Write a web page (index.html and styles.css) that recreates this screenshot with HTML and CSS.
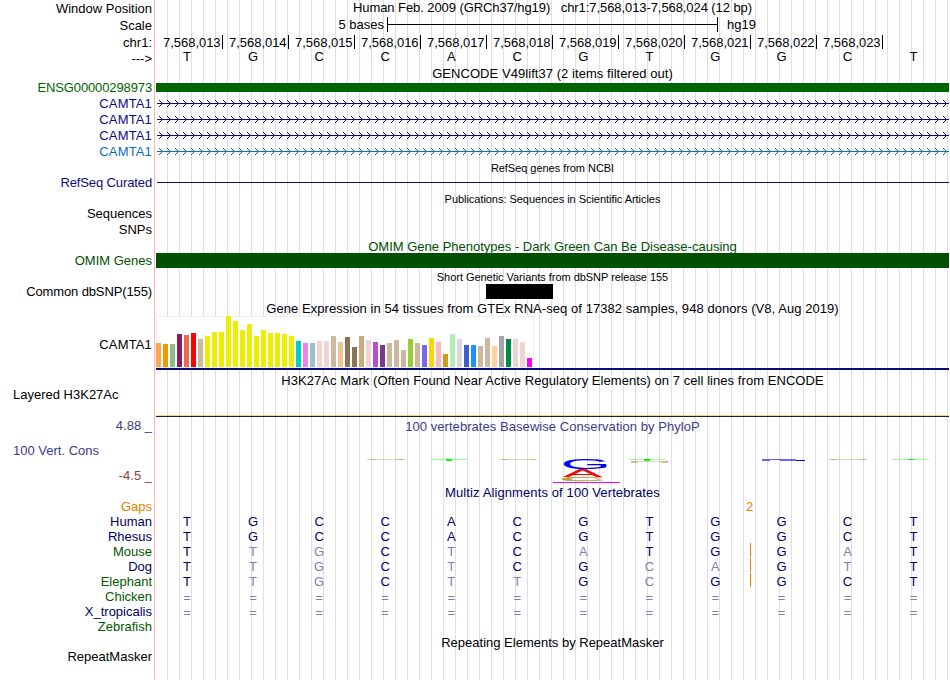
FILE: index.html
```html
<!DOCTYPE html>
<html lang="en">
<head>
<meta charset="utf-8">
<title>Genome Browser - Human hg19 chr1:7,568,013-7,568,024</title>
<link rel="stylesheet" href="styles.css">
</head>
<body>
<main class="browser">
  <div class="row h17"><div class="label down1">Window Position</div><div class="track"><div class="title t-pos">Human Feb. 2009 (GRCh37/hg19)&nbsp;&nbsp; chr1:7,568,013-7,568,024 (12 bp)</div></div></div>
  <div class="row h16"><div class="label down1">Scale</div><div class="track scale"><span class="scale-left">5 bases</span><span class="scale-bar"></span><span>hg19</span></div></div>
  <div class="row h16"><div class="label down2">chr1:</div><div class="track ruler" id="ruler"></div></div>
  <div class="row h16"><div class="label down2">---&gt;</div><div class="track bases black" data-seq="TGCCACGTGGCT"></div></div>
  <div class="row h15"><div class="label"></div><div class="track"><div class="title down1 wide">GENCODE V49lift37 (2 items filtered out)</div></div></div>
  <div class="row h16"><div class="label green tight">ENSG00000298973</div><div class="track"><div class="gene-bar"></div></div></div>
  <div class="row h16"><div class="label navy loose">CAMTA1</div><div class="track intron navy"></div></div>
  <div class="row h16"><div class="label navy loose">CAMTA1</div><div class="track intron navy"></div></div>
  <div class="row h16"><div class="label navy loose">CAMTA1</div><div class="track intron navy"></div></div>
  <div class="row h16"><div class="label sky loose">CAMTA1</div><div class="track intron sky"></div></div>
  <div class="row h15"><div class="label"></div><div class="track"><div class="title small">RefSeq genes from NCBI</div></div></div>
  <div class="row h16"><div class="label navy tight">RefSeq Curated</div><div class="track"><div class="thin-line"></div></div></div>
  <div class="row h15"><div class="label"></div><div class="track"><div class="title small">Publications: Sequences in Scientific Articles</div></div></div>
  <div class="row h16"><div class="label">Sequences</div><div class="track"></div></div>
  <div class="row h16"><div class="label">SNPs</div><div class="track"></div></div>
  <div class="row h15"><div class="label"></div><div class="track"><div class="title down1 darkgreen">OMIM Gene Phenotypes - Dark Green Can Be Disease-causing</div></div></div>
  <div class="row h16"><div class="label darkgreen">OMIM Genes</div><div class="track"><div class="omim-bar"></div></div></div>
  <div class="row h15"><div class="label"></div><div class="track"><div class="title small">Short Genetic Variants from dbSNP release 155</div></div></div>
  <div class="row h16"><div class="label tight">Common dbSNP(155)</div><div class="track"><div class="snp"></div></div></div>
  <div class="row h16"><div class="label"></div><div class="track"><div class="title down1 wide">Gene Expression in 54 tissues from GTEx RNA-seq of 17382 samples, 948 donors (V8, Aug 2019)</div></div></div>
  <div class="row h56"><div class="label gtex-label loose">CAMTA1</div><div class="track"><div class="gtex" id="gtex"></div><div class="gtex-base"></div></div></div>
  <div class="row h15"><div class="label"></div><div class="track"><div class="title down1 wide">H3K27Ac Mark (Often Found Near Active Regulatory Elements) on 7 cell lines from ENCODE</div></div></div>
  <div class="row h31"><div class="label left">Layered H3K27Ac</div><div class="track"><div class="h3k-line"></div></div></div>
  <div class="row h66">
    <div class="label cons"><span class="blue">4.88 _</span><span class="blue left">100 Vert. Cons</span><span class="red">-4.5 _</span></div>
    <div class="track">
      <div class="title down1 blue wide">100 vertebrates Basewise Conservation by PhyloP</div>
      <svg class="logo" width="793" height="28" viewBox="156 456 793 28">
        <path class="olive faint" d="M367 459.5h38M499 459.5h38M829 459.5h38"/>
        <path class="olive half" d="M370 459.5h6M397 459.5h7M502 459.5h6M530 459.5h6M831 459.5h6M859 459.5h6"/>
        <path class="lime faint" d="M431 459.5h36M629 459.5h36M892 459.5h37"/>
        <path class="lime" d="M446 460h6M644 460h6" stroke-width="2"/>
        <path class="lime" d="M908 459.5h6"/>
        <path class="olive faint" d="M631 461.5h38"/>
        <path class="olive half" d="M631 462h7M661 462h7" stroke-width="2"/>
        <path class="blue-stroke half" d="M762 460h8" stroke-width="2"/>
        <path class="blue-stroke half" d="M770 459.5h26M780 460.5h16"/>
        <path class="blue-stroke" d="M796 460.5h9"/>
        <text class="nt" fill="#0000ff" transform="translate(560.5 469.2) scale(3.25 .71)">G</text>
        <text class="nt" fill="#ff0000" transform="translate(563 477) scale(2.95 .51)">A</text>
        <text class="nt" fill="#b5a642" stroke="#b5a642" transform="translate(560 481) scale(3.1 .28)">C</text>
        <path d="M553 482.5h67" stroke="#ff00ff"/>
      </svg>
    </div>
  </div>
  <div class="row h15"><div class="label"></div><div class="track"><div class="title down1 ink wider">Multiz Alignments of 100 Vertebrates</div></div></div>
  <div class="row h15"><div class="label orange">Gaps</div><div class="track"><div class="gap-count">2</div></div></div>
  <div class="row h15"><div class="label ink">Human</div><div class="track bases" data-seq="TGCCACGTGGCT"></div></div>
  <div class="row h15"><div class="label ink">Rhesus</div><div class="track bases" data-seq="TGCCACGTGGCT"></div></div>
  <div class="row h15"><div class="label forest">Mouse</div><div class="track bases insert" data-seq="TtgCtCaTGGaT"></div></div>
  <div class="row h15"><div class="label ink">Dog</div><div class="track bases insert" data-seq="TtgCtCGcaGtT"></div></div>
  <div class="row h15"><div class="label forest">Elephant</div><div class="track bases insert" data-seq="TtgCttGcGGCT"></div></div>
  <div class="row h15"><div class="label forest">Chicken</div><div class="track bases down1" data-seq="============"></div></div>
  <div class="row h15"><div class="label ink">X_tropicalis</div><div class="track bases down1" data-seq="============"></div></div>
  <div class="row h15"><div class="label forest">Zebrafish</div><div class="track"></div></div>
  <div class="row h15"><div class="label"></div><div class="track"><div class="title down1">Repeating Elements by RepeatMasker</div></div></div>
  <div class="row h31"><div class="label">RepeatMasker</div><div class="track"></div></div>
</main>
<script src="tracks.js"></script>
</body>
</html>
```
FILE: styles.css
```css
* { box-sizing: border-box; }
body { margin: 0; background: #fff; }
.browser {
  width: 949px;
  height: 680px;
  overflow: hidden;
  font: 13px/15px "Liberation Sans", Arial, sans-serif;
  color: #000;
  white-space: nowrap;
  background:
    linear-gradient(#ffb4b4, #ffb4b4) 154px 0 / 1px 100% no-repeat,
    repeating-linear-gradient(to right, #dcdcf5 0 1px, transparent 1px 12px) 167px 0 / 782px 100% no-repeat;
}
.row { display: flex; }
.h15 { height: 15px; }
.h16 { height: 16px; }
.h17 { height: 17px; }
.h31 { height: 31px; }
.h56 { height: 56px; }
.h66 { height: 66px; }
.label { width: 152px; margin-right: 4px; text-align: right; flex: none; }
.left { text-align: left; padding-left: 13px; }
.track { width: 793px; flex: none; }
.title { text-align: center; height: 15px; }
.down1 { padding-top: 1px; }
.down2 { padding-top: 2px; }
.small { font-size: 11px; padding-top: 1px; letter-spacing: -.04px; }
.t-pos { letter-spacing: -.077px; }
.wide { letter-spacing: .056px; }
.wider { letter-spacing: .11px; }
.tight { letter-spacing: -.12px; }
.loose { letter-spacing: .15px; }

.green { color: #006400; }
.darkgreen { color: #005000; }
.forest { color: #005a00; }
.navy { color: #0c0c78; }
.sky { color: #0c6eb4; }
.ink { color: #000064; }
.blue { color: #3c3c8c; }
.red { color: #8c3c3c; }
.orange { color: #e68200; }

.scale { display: flex; }
.scale-left { width: 228px; text-align: right; }
.scale-bar {
  width: 331px;
  height: 15px;
  margin: 0 9px 0 3px;
  border: solid #000;
  border-width: 0 1px;
  background: linear-gradient(#000, #000) 0 7px / 100% 1px no-repeat;
}
.ruler { display: flex; padding-top: 2px; letter-spacing: -.05px; }
.ruler span { width: 66px; height: 14px; border-right: 1px solid #000; text-align: right; padding-right: 1.5px; }
.ruler span:first-child { width: 67px; }

.bases { display: grid; grid-template-columns: repeat(12, 66.05px); margin-left: -2px; text-align: center; color: #000064; }
.bases.black { color: #000; }
.bases .diff { color: #8080b0; }
.insert { position: relative; }
.insert::after { content: ""; position: absolute; left: 596px; top: -1px; width: 1px; height: 14px; background: #e68200; }
.gap-count { width: 9px; margin-left: 589px; text-align: center; color: #e68200; }

.gene-bar { height: 9px; margin-top: 3px; background: #006400; }
.intron svg { display: block; }
.thin-line { height: 1px; margin: 7px 0 0 1px; background: #0c0c78; }
.omim-bar { height: 15px; background: #005000; }
.snp { width: 67px; height: 15px; margin-left: 330px; background: #000; }

.gtex-label { padding-top: 21px; }
.gtex { display: flex; align-items: flex-end; gap: 2px; width: 378px; height: 52px; padding-bottom: 1px; background: #fff; box-shadow: inset 0 0 0 1px #f0f0f0; }
.gtex i { width: 5px; flex: none; }
.gtex-base { height: 2px; background: #0c0c78; }
.h3k-line { height: 2px; margin-top: 28px; background: linear-gradient(#ffd080 50%, #202020 50%); }

.cons { display: flex; flex-direction: column; gap: 10px; }
.logo { display: block; margin-top: 23px; }
.logo path { fill: none; }
.olive { stroke: #b5a642; }
.lime { stroke: #00ff00; }
.blue-stroke { stroke: #0000ff; }
.faint { opacity: .4; }
.half { opacity: .6; }
.nt { font: 20px "Liberation Sans", sans-serif; }
```
FILE: tracks.js
```js
const ruler = document.getElementById('ruler');
for (let n = 13; n <= 23; n++) {
  const s = document.createElement('span');
  s.textContent = '7,568,0' + n;
  ruler.append(s);
}

// Lowercase letters are bases that differ from the human sequence.
document.querySelectorAll('.bases').forEach(row => {
  for (const c of row.dataset.seq) {
    const s = document.createElement('span');
    s.textContent = c.toUpperCase();
    if (c === '=' || c !== c.toUpperCase()) s.className = 'diff';
    row.append(s);
  }
});

// Intron line with strand arrows every 8px.
document.querySelectorAll('.intron').forEach(row => {
  let d = 'M1 7.5H793';
  for (let x = 3; x < 793; x += 8) d += `M${x} 4l3.5 3.5l-3.5 3.5`;
  row.innerHTML = `<svg width="793" height="16"><path d="${d}" fill="none" stroke="currentColor"/></svg>`;
});

const heights = [24,23,23,33,32,34,28,31,35,35,51,46,37,43,31,37,34,34,33,31,26,24,24,26,26,31,25,30,20,31,27,25,22,24,27,17,28,24,22,29,25,13,33,28,22,22,21,29,21,31,28,28,25,9];
const colors = ['#ffa54f','#ee9a00','#8fbc8f','#8b1c62','#ee6a50','#ff0000','#cdb79e',
  ...Array(13).fill('#eeee00'),
  '#00cdcd','#ee82ee','#9ac0cd','#eed5d2','#eed5d2','#cdb79e','#eec591','#8b7355','#8b7355','#cdaa7d','#eed5d2','#b452cd','#7a378b','#cdb79e','#cdb79e','#cdb79e','#9acd32','#cdb79e','#7a67ee','#ffd700','#ffb6c1','#cd9b1d','#b4eeb4','#d9d9d9','#3a5fcd','#1e90ff','#cdb79e','#cdb79e','#ffd39b','#a6a6a6','#008b45','#eed5d2','#eed5d2','#ff00ff'];
const gtex = document.getElementById('gtex');
heights.forEach((h, i) => {
  const bar = document.createElement('i');
  bar.style.height = h + 'px';
  bar.style.background = colors[i];
  gtex.append(bar);
});
```
